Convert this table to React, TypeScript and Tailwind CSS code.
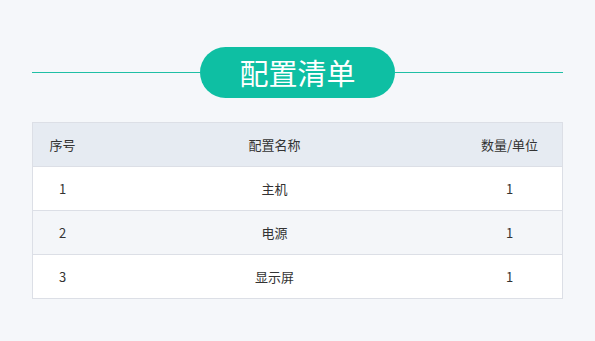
import React from "react";

const rows = [
  { id: "1", name: "主机", qty: "1" },
  { id: "2", name: "电源", qty: "1" },
  { id: "3", name: "显示屏", qty: "1" },
];

export default function App() {
  return (
    <div
      className="w-[595px] h-[341px] bg-[#f5f7fa] px-[32px] pt-[47px]"
      style={{ fontFamily: '"Noto Sans CJK SC", "Noto Sans", sans-serif' }}
    >
      <div className="flex items-center">
        <div className="flex-1 h-px bg-[#1fbfa5]" />
        <div className="w-[195px] h-[51px] rounded-full bg-[#0ebfa3] flex items-center justify-center text-white text-[29px] leading-none">
          配置清单
        </div>
        <div className="flex-1 h-px bg-[#1fbfa5]" />
      </div>

      <div className="mt-[24px] border border-[#dcdfe6] text-[13px] text-[#333333]">
        <div className="flex h-[44px] items-center bg-[#e6ebf2] border-b border-[#dcdfe6]">
          <div className="w-[59px] text-center">序号</div>
          <div className="flex-1 text-center">配置名称</div>
          <div className="w-[105px] text-center">数量/单位</div>
        </div>
        {rows.map((r, i) => (
          <div
            key={r.id}
            className={
              "flex items-center " +
              (i % 2 === 1 ? "bg-[#f4f6f9] " : "bg-white ") +
              (i < rows.length - 1 ? "h-[44px] border-b border-[#dcdfe6]" : "h-[43px]")
            }
          >
            <div className="w-[59px] text-center">{r.id}</div>
            <div className="flex-1 text-center">{r.name}</div>
            <div className="w-[105px] text-center">{r.qty}</div>
          </div>
        ))}
      </div>
    </div>
  );
}
